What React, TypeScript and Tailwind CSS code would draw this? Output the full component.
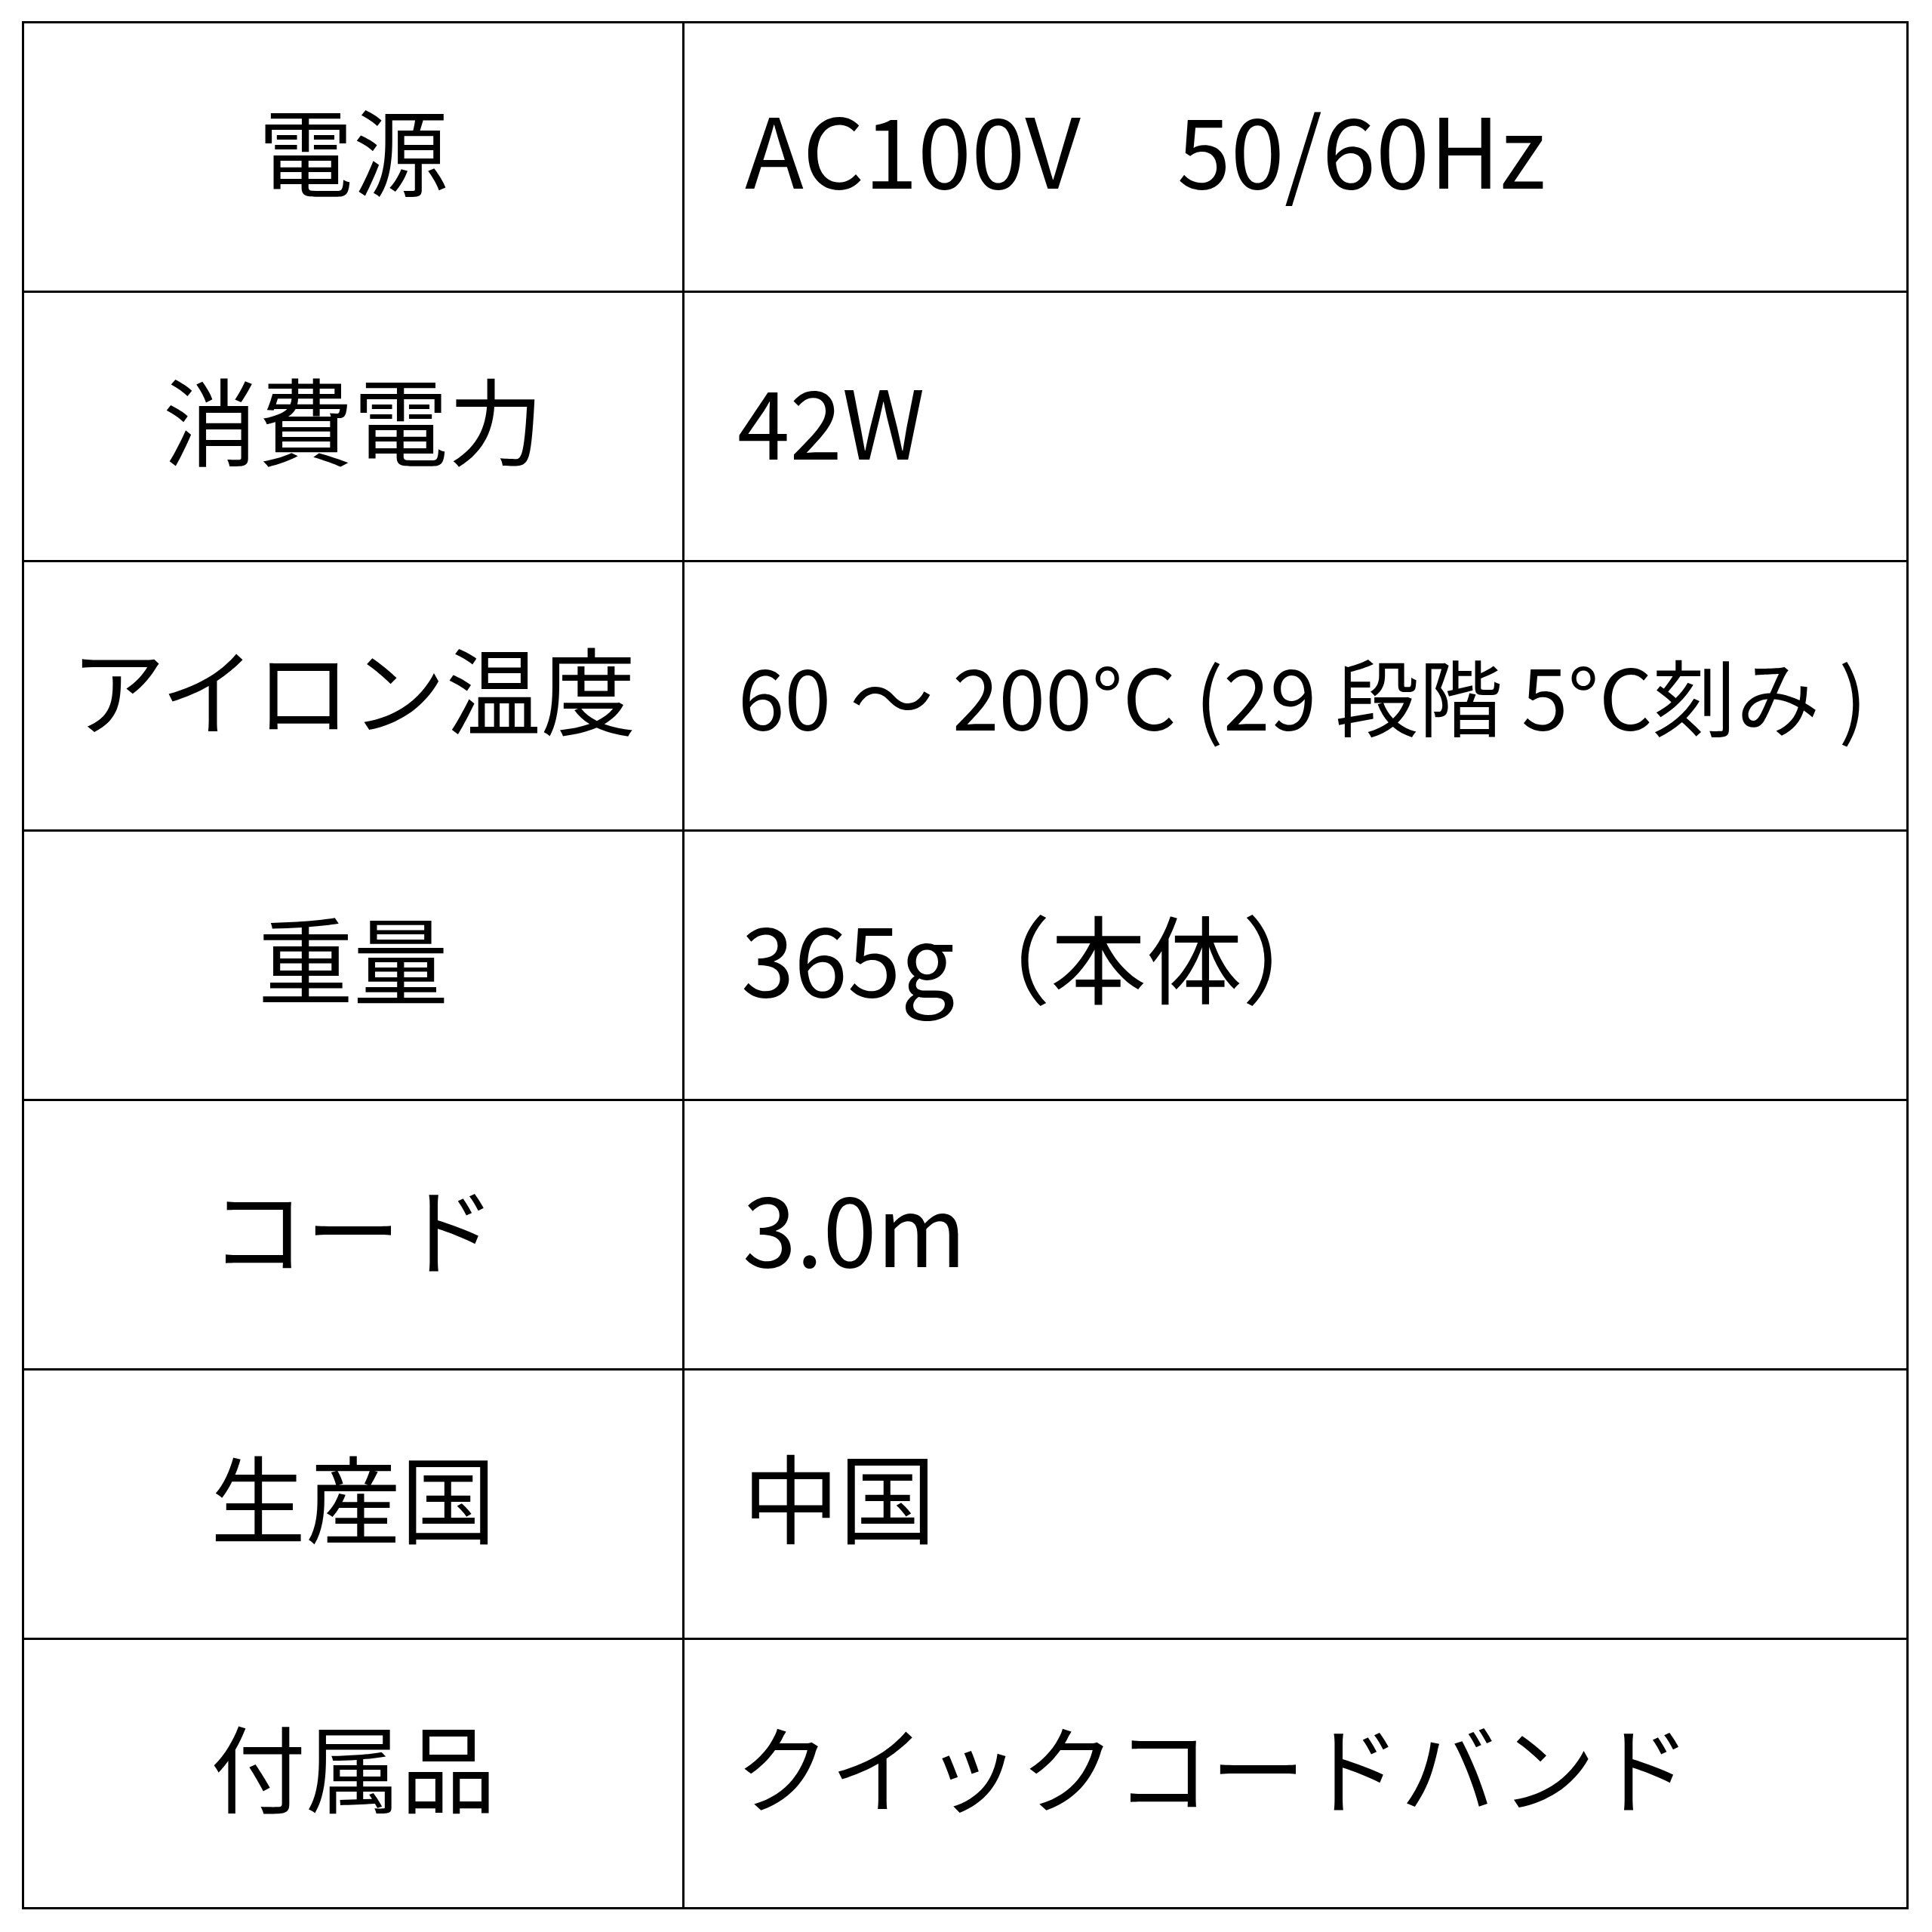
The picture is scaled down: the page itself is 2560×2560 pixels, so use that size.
const rows: { label: string; value: string; valueClass: string }[] = [
  { label: "電源", value: "AC100V\u300050/60Hz", valueClass: "pl-[80px] pb-[26px] text-[128px]" },
  { label: "消費電力", value: "42W", valueClass: "pl-[70px] pb-[22px] text-[125px]" },
  { label: "アイロン温度", value: "60 ～ 200°C (29 段階 5°C刻み )", valueClass: "pl-[71px] pb-[6px] text-[111px]" },
  { label: "重量", value: "365g（本体）", valueClass: "pl-[75px] pb-[26px] text-[127px]" },
  { label: "コード", value: "3.0m", valueClass: "pl-[77px] pb-[24px] text-[128px]" },
  { label: "生産国", value: "中国", valueClass: "pl-[77px] pb-[24px] text-[128px]" },
  { label: "付属品", value: "クイックコードバンド", valueClass: "pl-[67px] pb-[24px] text-[126px]" },
]

export default function App() {
  return (
    <div
      className="w-[2560px] h-[2560px] bg-white pt-[28px] pl-[29px] text-black font-normal"
      style={{ fontFamily: '"Noto Sans CJK JP", "Noto Sans", sans-serif' }}
    >
      <div className="w-[2500px] border-[3px] border-black flex flex-col">
        {rows.map((row, i) => (
          <div
            key={`spec:${i}`}
            className={i === 0 ? "flex h-[354px]" : "flex h-[357px] border-t-[3px] border-black"}
          >
            <div className="w-[875px] shrink-0 border-r-[3px] border-black flex items-center justify-center pb-[24px] text-[126px] leading-none">
              {row.label}
            </div>
            <div className={`flex-1 flex items-center leading-none whitespace-pre ${row.valueClass}`}>
              {row.value}
            </div>
          </div>
        ))}
      </div>
    </div>
  )
}
